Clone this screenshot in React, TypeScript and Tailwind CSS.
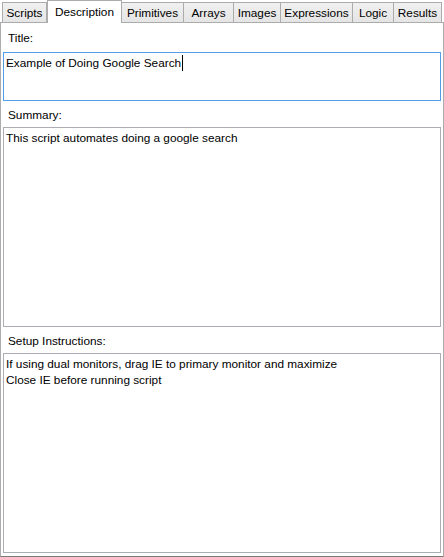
import React from 'react'

const TABS = [
  { label: 'Scripts', w: 'w-[45px]' },
  { label: 'Description', w: 'w-[75px]' },
  { label: 'Primitives', w: 'w-[62px]' },
  { label: 'Arrays', w: 'w-[50px]' },
  { label: 'Images', w: 'w-[47px]' },
  { label: 'Expressions', w: 'w-[72px]' },
  { label: 'Logic', w: 'w-[41px]' },
  { label: 'Results', w: 'w-[48px]' },
]

const SELECTED = 'Description'

function TabStrip() {
  return (
    <div className="flex h-[22px] items-end pl-[2px]">
      {TABS.map((t, i) =>
        t.label === SELECTED ? (
          <div
            key={t.label}
            className={`relative z-10 -mb-px flex h-[23px] items-center justify-center border-x border-t border-[#acacac] bg-white pb-[1px] ${t.w}`}
          >
            {t.label}
          </div>
        ) : (
          <div
            key={t.label}
            className={`flex h-[20px] items-center justify-center border-t border-r border-[#acacac] bg-gradient-to-b from-[#f0f0f0] to-[#e5e5e5] ${i === 0 ? 'border-l' : ''} ${t.w}`}
          >
            {t.label}
          </div>
        )
      )}
    </div>
  )
}

function FieldLabel({ children, tall }: { children: React.ReactNode; tall?: boolean }) {
  return (
    <div className={`flex items-center pl-[5px] ${tall ? 'h-[29px]' : 'h-[26px] pt-[1px]'}`}>
      {children}
    </div>
  )
}

export default function App() {
  return (
    <div
      className="h-[557px] w-[444px] overflow-hidden bg-white text-[11.8px] leading-[16px] text-black"
      style={{ fontFamily: '"Segoe UI", "Liberation Sans", Arial, sans-serif' }}
    >
      <TabStrip />
      <div className="flex h-[535px] flex-col border border-[#acacac] border-b-[#7a7a7a] px-[2px]">
        <FieldLabel tall>Title:</FieldLabel>
        {/* Title box (focused) */}
        <div className="h-[49px] border border-[#569de5] px-[2px] pt-[2px]">
          <span>Example of Doing Google Search</span>
          <span className="ml-px inline-block h-[16px] w-px bg-black align-top" />
        </div>

        <FieldLabel>Summary:</FieldLabel>
        <div className="h-[200px] border border-[#abadb3] px-[2px] pt-[2px]">
          This script automates doing a google search
        </div>

        <FieldLabel>Setup Instructions:</FieldLabel>
        <div className="h-[200px] border border-[#abadb3] px-[2px] pt-[2px]">
          <div>If using dual monitors, drag IE to primary monitor and maximize</div>
          <div>Close IE before running script</div>
        </div>
      </div>
    </div>
  )
}
